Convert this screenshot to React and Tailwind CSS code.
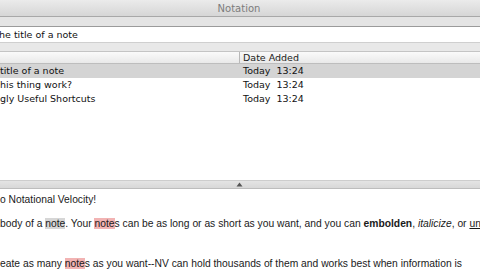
export default function App() {
  const ui = { fontFamily: '"DejaVu Sans", "Liberation Sans", sans-serif' };
  const body = { fontFamily: '"Liberation Sans", Arial, sans-serif' };
  return (
    <div className="w-[480px] h-[271px] overflow-hidden bg-white flex flex-col" style={ui}>
      {/* title bar */}
      <div className="h-[17px] shrink-0 flex items-center justify-center bg-gradient-to-b from-[#ebebeb] to-[#d6d6d6] border-b border-[#a8a8a8]">
        <span className="text-[10px] text-[#7c7c7c] ml-[-2px]">Notation</span>
      </div>
      {/* search area */}
      <div className="h-[35px] shrink-0 bg-[#e6e6e6] flex flex-col">
        <div className="h-[9px] bg-[#e4e4e4]" />
        <div className="h-[17px] bg-white border-t border-[#9a9a9a] border-b border-b-[#cfcfcf] flex items-center">
          <span className="text-[9.5px] text-[#111] ml-[-1px] pt-[1px]">he title of a note</span>
        </div>
        <div className="flex-1 bg-[#e8e8e8] border-b border-[#c4c4c4]" />
      </div>
      {/* list header */}
      <div className="h-[12px] shrink-0 flex bg-gradient-to-b from-[#fafafa] to-[#e9e9e9] border-b border-[#bdbdbd]">
        <div className="w-[240px] border-r border-[#b8b8b8]" />
        <div className="pl-[3px] text-[9.5px] leading-[12px] text-[#222]">Date Added</div>
      </div>
      {/* rows */}
      <div className="flex flex-col text-[9.5px] text-[#111]">
        <div className="h-[14px] flex items-center bg-[#d4d4d4]">
          <div className="w-[240px]">title of a note</div>
          <div className="pl-[3px] whitespace-pre">Today  13:24</div>
        </div>
        <div className="h-[14px] flex items-center">
          <div className="w-[240px]">his thing work?</div>
          <div className="pl-[3px] whitespace-pre">Today  13:24</div>
        </div>
        <div className="h-[14px] flex items-center">
          <div className="w-[240px]">gly Useful Shortcuts</div>
          <div className="pl-[3px] whitespace-pre">Today  13:24</div>
        </div>
      </div>
      <div className="flex-1" />
      {/* splitter */}
      <div className="h-[9px] shrink-0 bg-gradient-to-b from-[#e4e4e4] to-[#d8d8d8] border-t border-[#cdcdcd] border-b border-b-[#bdbdbd] flex items-center justify-center">
        <svg width="7" height="5" viewBox="0 0 7 5" className="ml-[-2px]">
          <path d="M3.5 0.5 L6.5 4.5 L0.5 4.5 Z" fill="#555" />
        </svg>
      </div>
      {/* body */}
      <div className="h-[82px] shrink-0 bg-white text-[10.3px] text-[#1a1a1a] whitespace-nowrap" style={body}>
        <div className="pt-[2px] leading-[18px]">o Notational Velocity!</div>
        <div className="mt-[6px] leading-[18px]">
          body of a <span className="bg-[#d6d6d6]">note</span>. Your <span className="bg-[#f2b3b3]">note</span>s can be as long or as short as you want, and you can <b>embolden</b>, <i>italicize</i>, or <u>un</u>
        </div>
        <div className="mt-[22px] leading-[18px]">
          eate as many <span className="bg-[#f2b3b3]">note</span>s as you want--NV can hold thousands of them and works best when information is
        </div>
      </div>
    </div>
  );
}
